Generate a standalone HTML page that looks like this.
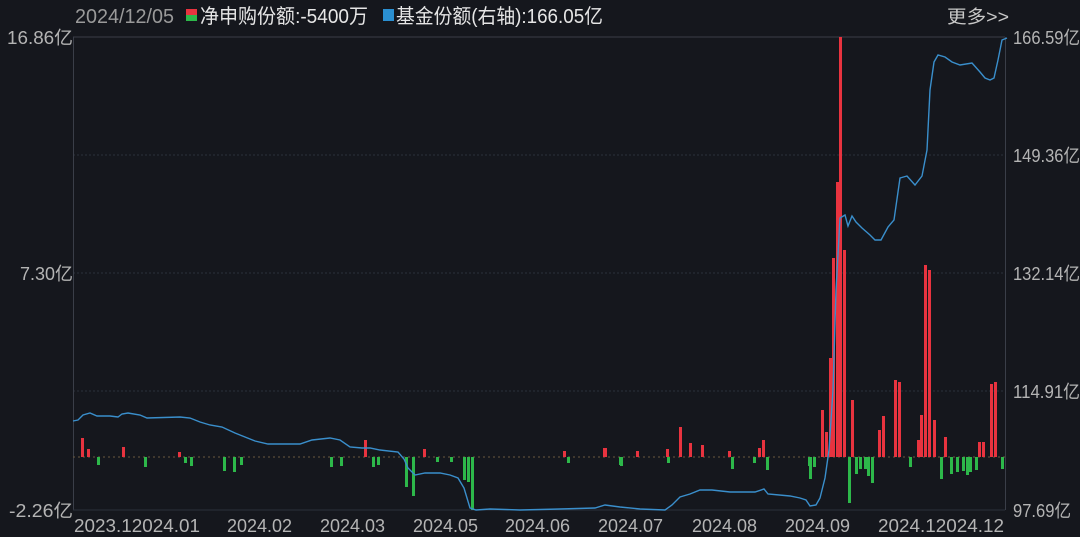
<!DOCTYPE html>
<html><head><meta charset="utf-8"><style>
html,body{margin:0;padding:0;background:#15171d;width:1080px;height:537px;overflow:hidden}
svg{display:block}
text{font-family:"Liberation Sans","Noto Sans CJK SC",sans-serif}
</style></head><body>
<svg width="1080" height="537" viewBox="0 0 1080 537" xmlns="http://www.w3.org/2000/svg">
<rect width="1080" height="537" fill="#15171d"/>
<!-- header -->
<text x="75" y="23" font-size="20" fill="#9a9a9a" textLength="99" lengthAdjust="spacingAndGlyphs">2024/12/05</text>
<rect x="186" y="9" width="11" height="6" fill="#e8333f"/><rect x="186" y="15" width="11" height="6" fill="#2db84a"/>
<text x="200" y="23" font-size="20" fill="#e6e6e6" textLength="168" lengthAdjust="spacingAndGlyphs">净申购份额:-5400万</text>
<rect x="383" y="9" width="11" height="12" fill="#2a8fd1"/>
<text x="396" y="23" font-size="20" fill="#e6e6e6" textLength="207" lengthAdjust="spacingAndGlyphs">基金份额(右轴):166.05亿</text>
<text x="947" y="23" font-size="18" fill="#c8c8c8" textLength="62" lengthAdjust="spacingAndGlyphs">更多&gt;&gt;</text>
<!-- grid -->
<line x1="73" y1="37" x2="1005" y2="37" stroke="#3a3e48" stroke-width="1"/>
<g stroke="#2c303a" stroke-width="1" stroke-dasharray="2,2">
<line x1="73" y1="155" x2="1005" y2="155"/><line x1="73" y1="273" x2="1005" y2="273"/><line x1="73" y1="391" x2="1005" y2="391"/>
</g>
<line x1="73.5" y1="37" x2="73.5" y2="510" stroke="#3a3e48"/>
<line x1="1005.5" y1="37" x2="1005.5" y2="510" stroke="#3a3e48"/>
<line x1="73" y1="510" x2="1005" y2="510" stroke="#2c303a"/>
<line x1="73" y1="457" x2="1005" y2="457" stroke="#6a5a40" stroke-width="1" stroke-dasharray="2,3"/>
<!-- axis labels -->
<g font-size="18" fill="#b4b4b4">
<text x="7" y="44" textLength="66" lengthAdjust="spacingAndGlyphs">16.86亿</text><text x="20" y="280" textLength="53" lengthAdjust="spacingAndGlyphs">7.30亿</text><text x="9" y="517" textLength="64" lengthAdjust="spacingAndGlyphs">-2.26亿</text>
<text x="1013" y="44" textLength="67" lengthAdjust="spacingAndGlyphs">166.59亿</text><text x="1013" y="162" textLength="67" lengthAdjust="spacingAndGlyphs">149.36亿</text><text x="1013" y="280" textLength="67" lengthAdjust="spacingAndGlyphs">132.14亿</text><text x="1013" y="398" textLength="67" lengthAdjust="spacingAndGlyphs">114.91亿</text><text x="1013" y="517" textLength="58" lengthAdjust="spacingAndGlyphs">97.69亿</text>
<text x="74" y="532" textLength="126" lengthAdjust="spacingAndGlyphs">2023.12024.01</text><text x="227" y="532">2024.02</text><text x="320" y="532">2024.03</text><text x="413" y="532">2024.05</text><text x="505" y="532">2024.06</text><text x="598" y="532">2024.07</text><text x="692" y="532">2024.08</text><text x="785" y="532">2024.09</text><text x="878" y="532" textLength="126" lengthAdjust="spacingAndGlyphs">2024.12024.12</text>
</g>
<!-- red bars -->
<g fill="#e8333f">
<rect x="81" y="438" width="3" height="19"/><rect x="87" y="449" width="3" height="8"/><rect x="122" y="447" width="3" height="10"/><rect x="178" y="452" width="3" height="5"/>
<rect x="364" y="440" width="3" height="17"/><rect x="423" y="449" width="3" height="8"/><rect x="563" y="451" width="3" height="6"/><rect x="603" y="448" width="3" height="9"/>
<rect x="604" y="448" width="3" height="9"/><rect x="636" y="451" width="3" height="6"/><rect x="666" y="449" width="3" height="8"/><rect x="679" y="427" width="3" height="30"/>
<rect x="689" y="443" width="3" height="14"/><rect x="701" y="445" width="3" height="12"/><rect x="728" y="451" width="3" height="6"/><rect x="758" y="448" width="3" height="9"/>
<rect x="762" y="440" width="3" height="17"/>
<rect x="821" y="410" width="3" height="47"/><rect x="825" y="432" width="3" height="25"/><rect x="829" y="358" width="3" height="99"/><rect x="832" y="258" width="3" height="199"/>
<rect x="836" y="182" width="3" height="275"/><rect x="839" y="37" width="3" height="420"/><rect x="843" y="250" width="3" height="207"/><rect x="851" y="400" width="3" height="57"/>
<rect x="878" y="430" width="3" height="27"/><rect x="882" y="416" width="3" height="41"/><rect x="894" y="380" width="3" height="77"/><rect x="898" y="382" width="3" height="75"/>
<rect x="917" y="440" width="3" height="17"/><rect x="920" y="415" width="3" height="42"/><rect x="924" y="265" width="3" height="192"/><rect x="928" y="270" width="3" height="187"/>
<rect x="933" y="420" width="3" height="37"/><rect x="944" y="437" width="3" height="20"/><rect x="978" y="442" width="3" height="15"/><rect x="982" y="442" width="3" height="15"/>
<rect x="990" y="384" width="3" height="73"/><rect x="994" y="382" width="3" height="75"/>
</g>
<!-- green bars -->
<g fill="#2db84a">
<rect x="97" y="457" width="3" height="8"/><rect x="144" y="457" width="3" height="10"/><rect x="184" y="457" width="3" height="6"/><rect x="190" y="457" width="3" height="9"/>
<rect x="223" y="457" width="3" height="14"/><rect x="233" y="457" width="3" height="15"/><rect x="240" y="457" width="3" height="8"/><rect x="330" y="457" width="3" height="10"/>
<rect x="340" y="457" width="3" height="9"/><rect x="372" y="457" width="3" height="10"/><rect x="377" y="457" width="3" height="8"/><rect x="405" y="457" width="3" height="30"/>
<rect x="412" y="457" width="3" height="39"/><rect x="436" y="457" width="3" height="5"/><rect x="450" y="457" width="3" height="5"/><rect x="463" y="457" width="3" height="23"/>
<rect x="467" y="457" width="3" height="25"/><rect x="471" y="457" width="3" height="53"/><rect x="567" y="457" width="3" height="6"/><rect x="619" y="457" width="3" height="8"/>
<rect x="620" y="457" width="3" height="9"/><rect x="667" y="457" width="3" height="6"/><rect x="731" y="457" width="3" height="12"/><rect x="753" y="457" width="3" height="6"/>
<rect x="766" y="457" width="3" height="13"/><rect x="808" y="457" width="3" height="9"/><rect x="809" y="457" width="3" height="22"/><rect x="813" y="457" width="3" height="10"/>
<rect x="848" y="457" width="3" height="46"/><rect x="855" y="457" width="3" height="17"/><rect x="859" y="457" width="3" height="12"/><rect x="864" y="457" width="3" height="12"/>
<rect x="867" y="457" width="3" height="19"/><rect x="871" y="457" width="3" height="26"/><rect x="909" y="457" width="3" height="10"/><rect x="940" y="457" width="3" height="22"/>
<rect x="950" y="457" width="3" height="17"/><rect x="956" y="457" width="3" height="15"/><rect x="962" y="457" width="3" height="14"/><rect x="966" y="457" width="3" height="18"/>
<rect x="969" y="457" width="3" height="15"/><rect x="975" y="457" width="3" height="13"/><rect x="1001" y="457" width="3" height="12"/>
</g>
<!-- blue line -->
<polyline fill="none" stroke="#3a8fcc" stroke-width="1.4" points="73,421 78,420 83,415 90,413 97,416 110,416 118,417 122,414 128,413 140,415 147,418 180,417 190,418 200,422 210,425 222,427 235,433 245,437 255,441 268,444 285,444 300,444 312,440 330,438 340,440 350,447 362,448 370,448 380,450 398,452 404,459 408,468 415,475 425,473 440,473 450,475 458,478 464,488 470,508 476,510 490,509 520,510 560,509 595,508 605,505 620,507 640,509 665,510 672,505 680,497 690,494 700,490 712,490 730,492 755,492 764,489 768,494 790,496 800,498 806,500 810,506 816,505 820,498 825,478 829,450 833,390 836,290 840,218 845,215 848,226 852,216 856,222 862,228 870,235 875,240 881,240 888,227 894,220 900,178 907,176 915,185 922,176 927,150 930,90 934,62 938,55 945,57 952,62 960,65 972,63 980,72 985,78 990,80 994,78 998,60 1002,40 1007,38"/>
</svg>
</body></html>
